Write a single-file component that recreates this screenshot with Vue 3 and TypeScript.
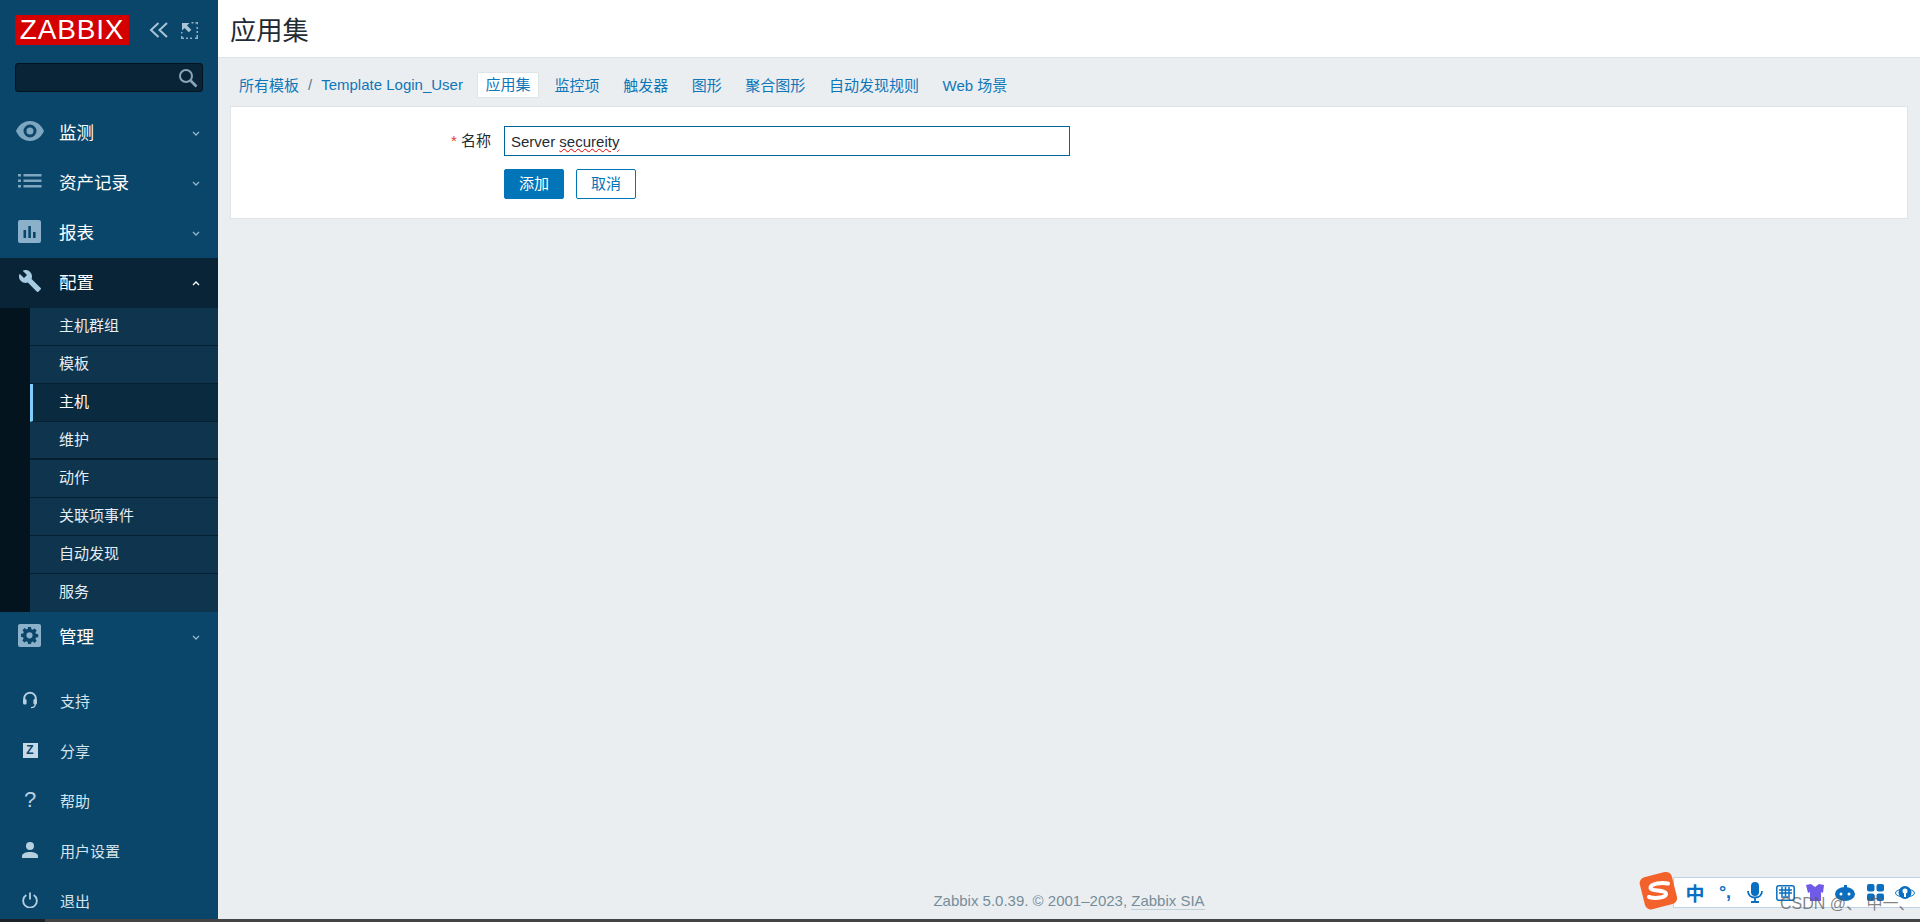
<script setup lang="ts">
interface Entry { label: string; icon: string }
const mainTop: Entry[] = [
  { label: '监测', icon: 'eye' },
  { label: '资产记录', icon: 'list' },
  { label: '报表', icon: 'chart' },
]
const subItems = [
  { label: '主机群组' },
  { label: '模板' },
  { label: '主机', active: true },
  { label: '维护', thick: true },
  { label: '动作' },
  { label: '关联项事件' },
  { label: '自动发现' },
  { label: '服务' },
]
const userItems: Entry[] = [
  { label: '支持', icon: 'head' },
  { label: '分享', icon: 'z' },
  { label: '帮助', icon: 'help' },
  { label: '用户设置', icon: 'user' },
  { label: '退出', icon: 'power' },
]
const tabs = ['监控项', '触发器', '图形', '聚合图形', '自动发现规则', 'Web 场景']
</script>

<template>
  <div class="page">
    <div class="columns">
      <aside class="side">
        <div class="brand">
          <div class="logo">ZABBIX</div>
          <svg class="collapse" width="20" height="16" viewBox="0 0 20 16" fill="none" stroke="#a9c4d6" stroke-width="2">
            <path d="M9.500 1 2 8l7.500 7M18 1l-7.500 7 7.500 7" />
          </svg>
          <svg class="expand" width="17" height="17" viewBox="0 0 17 17" fill="none">
            <path d="M10.500 .75h2M14.500 .75h1.750v1.500M16.250 5v2M16.250 9v2M16.250 13v3.250H14M11 16.250H9M7 16.250H5M3 16.250H.75V14M.75 11.500V10" stroke="#8fb0c6" stroke-width="1.500" />
            <path d="M1 1h7.500L6 3.500l4.300 4.300-2.500 2.500L3.500 6 1 8.500z" fill="#a9c4d6" />
          </svg>
        </div>
        <div class="search">
          <svg width="20" height="20" viewBox="0 0 20 20" fill="none" stroke="#8aa5b8" stroke-width="2">
            <circle cx="8" cy="8" r="6" />
            <path d="m12.500 12.500 6 6" stroke-width="2.600" />
          </svg>
        </div>

        <nav class="menu">
          <a v-for="m in mainTop" :key="m.label" class="main-item">
            <span class="main-icon">
              <svg v-if="m.icon === 'eye'" width="28" height="20" viewBox="0 0 28 20">
                <path fill-rule="evenodd" fill="#7ea6c1" d="M14 0c6.500 0 11.500 4.300 14 10-2.500 5.700-7.500 10-14 10S2.500 15.700 0 10C2.500 4.300 7.500 0 14 0Zm0 3.500a6.500 6.500 0 1 0 0 13 6.500 6.500 0 0 0 0-13Zm0 3a3.500 3.500 0 1 1 0 7 3.500 3.500 0 0 1 0-7Z" />
              </svg>
              <svg v-else-if="m.icon === 'list'" width="24" height="14" viewBox="0 0 24 14" fill="#7ea6c1">
                <rect x="0" y="0" width="3" height="2.500" /><rect x="0" y="5.500" width="3" height="2.500" /><rect x="0" y="11" width="3" height="2.500" />
                <rect x="5.500" y="0" width="18" height="2.500" /><rect x="5.500" y="5.500" width="18" height="2.500" /><rect x="5.500" y="11" width="18" height="2.500" />
              </svg>
              <svg v-else width="23" height="23" viewBox="0 0 23 23">
                <rect width="23" height="23" rx="2" fill="#8ab0ca" />
                <path d="M5.500 10h2.600v8H5.500zM10.300 6h2.600v12h-2.600zM15 12h2.600v6H15z" fill="#0a466a" />
              </svg>
            </span>
            <span class="main-label">{{ m.label }}</span>
            <svg class="chev" width="8" height="5" viewBox="0 0 8 5" fill="none" stroke="#93b4c9" stroke-width="1.300"><path d="m1 1 3 3 3-3" /></svg>
          </a>

          <a class="main-item open">
            <span class="main-icon">
              <svg width="24" height="24" viewBox="0 0 24 24">
                <path fill="#a7cbe3" d="M22.700 19 13.600 9.900c.9-2.300.4-5-1.500-6.900C10.100 1 7.100.6 4.700 1.700L9 6 6 9 1.600 4.700C.400 7.100.900 10.100 2.900 12.100c1.900 1.900 4.600 2.400 6.900 1.500l9.100 9.100c.4.400 1 .4 1.400 0l2.300-2.300c.5-.4.5-1.100.1-1.400Z" />
              </svg>
            </span>
            <span class="main-label">配置</span>
            <svg class="chev" width="8" height="5" viewBox="0 0 8 5" fill="none" stroke="#fff" stroke-width="1.300"><path d="m1 4 3-3 3 3" /></svg>
          </a>
          <ul class="sub">
            <li v-for="s in subItems" :key="s.label" class="sub-item" :class="{ active: s.active, thick: s.thick }">{{ s.label }}</li>
          </ul>

          <a class="main-item">
            <span class="main-icon">
              <svg width="23" height="23" viewBox="0 0 23 23">
                <rect width="23" height="23" rx="2" fill="#8ab0ca" />
                <path fill="#0a466a" fill-rule="evenodd" d="M10 4h3l.4 2.200 1.300.6 1.900-1.300 2.100 2.100-1.300 1.900.6 1.300 2.200.4v3l-2.200.4-.6 1.300 1.300 1.900-2.100 2.100-1.900-1.300-1.300.6L13 21h-3l-.4-2.200-1.300-.6-1.900 1.300-2.100-2.100 1.300-1.900-.6-1.300L3 13.800v-3l2.200-.4.6-1.300-1.300-1.900 2.100-2.100 1.900 1.300 1.300-.6Zm1.500 5.200a3.100 3.100 0 1 0 0 6.200 3.100 3.100 0 0 0 0-6.200Z" transform="translate(0 -1)" />
              </svg>
            </span>
            <span class="main-label">管理</span>
            <svg class="chev" width="8" height="5" viewBox="0 0 8 5" fill="none" stroke="#93b4c9" stroke-width="1.300"><path d="m1 1 3 3 3-3" /></svg>
          </a>
        </nav>

        <nav class="user-menu">
          <a v-for="u in userItems" :key="u.label" class="user-item">
            <span class="user-icon">
              <svg v-if="u.icon === 'head'" width="16" height="18" viewBox="0 0 16 18" fill="none">
                <path d="M2.200 10V7.500a5.800 5.800 0 0 1 11.600 0V10" stroke="#b6d0e0" stroke-width="2" />
                <rect x="1" y="8" width="3.600" height="5.500" rx="1.500" fill="#b6d0e0" />
                <rect x="11.400" y="8" width="3.600" height="5.500" rx="1.500" fill="#b6d0e0" />
                <path d="M13.300 13c0 2.500-2 3.600-4.300 3.600" stroke="#b6d0e0" stroke-width="1.300" />
              </svg>
              <span v-else-if="u.icon === 'z'" class="z-tile">Z</span>
              <span v-else-if="u.icon === 'help'" class="q-mark">?</span>
              <svg v-else-if="u.icon === 'user'" width="16" height="16" viewBox="0 0 16 16" fill="#b6d0e0">
                <circle cx="8" cy="4" r="4" />
                <path d="M0 16v-2c0-2.500 4-4 8-4s8 1.500 8 4v2z" />
              </svg>
              <svg v-else width="16" height="16" viewBox="0 0 16 16" fill="none" stroke="#b6d0e0" stroke-width="1.800">
                <path d="M4.300 3.100a6.800 6.800 0 1 0 7.400 0M8 .5v7" />
              </svg>
            </span>
            <span class="user-label">{{ u.label }}</span>
          </a>
        </nav>
      </aside>

      <main class="main">
        <header class="head"><h1>应用集</h1></header>
        <div class="content">
          <div class="crumbs">
            <a class="link">所有模板</a>
            <span class="slash">/</span>
            <a class="link">Template Login_User</a>
            <span class="tab current">应用集</span>
            <a v-for="t in tabs" :key="t" class="link tab">{{ t }}</a>
          </div>
          <section class="card">
            <div class="form-row">
              <label class="form-label"><span class="star">*</span> 名称</label>
              <div class="input"><span>Server </span><span class="typo">secureity</span></div>
            </div>
            <div class="actions">
              <span class="btn primary">添加</span>
              <span class="btn ghost">取消</span>
            </div>
          </section>
          <footer class="foot">Zabbix 5.0.39. © 2001–2023, <span class="sia">Zabbix SIA</span></footer>
        </div>
      </main>
    </div>
    <div class="strip"><span class="strip-dark"></span></div>

    <div class="ime">
      <svg class="ime-logo" width="40" height="40" viewBox="0 0 40 40">
        <rect x="3" y="3" width="33" height="33" rx="6" fill="#f2622a" transform="rotate(-14 20 20)" />
        <path d="M29 12.500C23 11 12 12.500 11.500 16.500 11 20.500 27 18.500 27 23c0 3.500-10 5-17 3" fill="none" stroke="#fff" stroke-width="4" stroke-linecap="round" />
      </svg>
      <div class="ime-bar">
        <span class="ime-zh">中</span>
        <span class="ime-punct">°,</span>
        <svg width="16" height="21" viewBox="0 0 16 21" fill="none">
          <rect x="4" y="0" width="8" height="14" rx="4" fill="#0a6fc0" />
          <path d="M1 9c0 4 3 6.500 7 6.500S15 13 15 9M8 15.500V20M4 20h8" stroke="#0a6fc0" stroke-width="1.800" />
        </svg>
        <svg width="19" height="16" viewBox="0 0 19 16" fill="none" stroke="#0a6fc0" stroke-width="1.500">
          <rect x=".8" y=".8" width="17.400" height="14.400" rx="2" />
          <path d="M3 5h13M3 8h13M6 2v9M9.500 2v9M13 2v9M5 12h9" />
        </svg>
        <svg width="18" height="18" viewBox="0 0 18 18"><path d="M0 1 5 0l4 3 4-3 5 1-1 8-2-1v9H4V8L2 9z" fill="#6f5be8" /></svg>
        <svg width="20" height="16" viewBox="0 0 20 16">
          <ellipse cx="10" cy="9" rx="10" ry="7" fill="#0a6fc0" />
          <rect x="9" y="0" width="3" height="4" fill="#0a6fc0" />
          <circle cx="6" cy="9" r="1.500" fill="#fff" /><circle cx="14" cy="9" r="1.500" fill="#fff" />
        </svg>
        <svg width="17" height="17" viewBox="0 0 17 17" fill="#0a6fc0">
          <rect width="7.500" height="7.500" rx="2" /><rect x="9.500" width="7.500" height="7.500" rx="2" />
          <rect y="9.500" width="7.500" height="7.500" rx="2" /><rect x="9.500" y="9.500" width="7.500" height="7.500" rx="2" />
        </svg>
        <svg width="20" height="20" viewBox="0 0 20 20">
          <ellipse cx="10" cy="10" rx="9.500" ry="4" fill="none" stroke="#0a6fc0" stroke-width="1" />
          <circle cx="10" cy="9.500" r="6.500" fill="#0a6fc0" />
          <circle cx="10" cy="8" r="2.500" fill="#fff" /><rect x="9" y="9" width="2" height="5" fill="#fff" />
        </svg>
      </div>
    </div>
    <div class="mark">CSDN @、 中一、</div>
  </div>
</template>

<style>
html, body { margin: 0; padding: 0; background: #ebeef1; }
</style>

<style scoped>
.page {
  position: relative;
  height: 922px;
  display: flex;
  flex-direction: column;
  overflow: hidden;
  font-family: "Liberation Sans", "Noto Sans CJK SC", sans-serif;
  background: #ebeef1;
}
.columns { flex: 1; display: flex; min-height: 0; }
.strip { height: 3px; flex: none; background: #444; display: flex; }
.strip-dark { width: 45px; background: #1c2226; }

.side {
  width: 218px;
  flex: none;
  background: #0a466a;
  overflow: hidden;
  display: flex;
  flex-direction: column;
}
.brand {
  display: flex;
  flex: none;
  align-items: center;
  height: 30px;
  padding: 15px 0 0 15px;
}
.logo {
  width: 114px;
  height: 30px;
  background: #d40000;
  color: #fff;
  font-size: 28px;
  line-height: 30px;
  letter-spacing: .8px;
  text-align: center;
}
.collapse { margin-left: 20px; }
.expand { margin-left: 12px; }
.search {
  flex: none;
  margin: 18px 15px 0;
  height: 29px;
  box-sizing: border-box;
  background: #082436;
  border: 1px solid #04131d;
  border-radius: 3px;
  display: flex;
  align-items: center;
  justify-content: flex-end;
  padding-right: 4px;
}
.menu { margin-top: 16px; flex: none; }
.main-item {
  height: 50px;
  box-sizing: border-box;
  padding-bottom: 4px;
  display: flex;
  align-items: center;
  color: #fff;
  font-size: 17.5px;
}
.main-item.open { background: #082436; }
.main-icon { width: 59px; flex: none; display: flex; justify-content: center; }
.main-label { flex: 1; }
.chev { margin: 4px 18px 0 0; }

.sub { list-style: none; margin: 0; padding: 0 0 0 30px; background: #03141e; }
.sub-item {
  height: 38px;
  box-sizing: border-box;
  padding-left: 29px;
  line-height: 36px;
  font-size: 15px;
  color: #e6eef3;
  background: #0e344e;
  border-bottom: 1px solid #05202f;
}
.sub-item:last-child { border-bottom: 0; }
.sub-item.active {
  background: #0a2a3f;
  color: #fff;
  border-left: 3px solid #7fcdfb;
  padding-left: 26px;
}
.sub-item.thick { border-bottom: 2px solid #05202f; }

.user-menu { margin-top: 13px; flex: none; }
.user-item {
  height: 50px;
  flex: none;
  display: flex;
  align-items: center;
  font-size: 15px;
  color: #d6e4ed;
}
.user-icon { width: 60px; flex: none; display: flex; justify-content: center; }
.z-tile {
  width: 15px;
  height: 15px;
  background: #c5d9e6;
  color: #0a466a;
  font: bold 12px/15px "Liberation Sans", sans-serif;
  text-align: center;
}
.q-mark { color: #b6d0e0; font: 22px/22px "Liberation Sans", sans-serif; }

.main { flex: 1; min-width: 0; display: flex; flex-direction: column; }
.head {
  height: 58px;
  flex: none;
  box-sizing: border-box;
  background: #fff;
  border-bottom: 1px solid #dfe4e7;
  padding-left: 12px;
  display: flex;
  align-items: center;
}
.head h1 { margin: 0; font-size: 26.25px; font-weight: 400; color: #1f2c33; }
.content { flex: 1; display: flex; flex-direction: column; padding: 0 12px; min-height: 0; }

.crumbs {
  display: flex;
  flex: none;
  align-items: center;
  height: 26px;
  margin-top: 14px;
  padding-left: 9px;
  font-size: 15px;
}
.link { color: #0f76b8; margin-bottom: 2px; }
.slash { color: #5f7585; margin: 0 9px 2px; }
.tab { white-space: nowrap; }
.link.tab { margin-left: 23.6px; }
.tab.current {
  margin-left: 14px;
  margin-right: -8px;
  width: 62px;
  height: 26px;
  box-sizing: border-box;
  background: #fff;
  border: 1px solid #dfe4e7;
  border-radius: 2px;
  color: #0f76b8;
  text-align: center;
  line-height: 24px;
}
.card {
  flex: none;
  margin-top: 8px;
  height: 113px;
  box-sizing: border-box;
  background: #fff;
  border: 1px solid #dfe4e7;
  padding: 19px 0 0 273px;
}
.form-row { display: flex; align-items: center; }
.form-label {
  width: 120px;
  margin-left: -120px;
  padding: 0 13px 3px 0;
  box-sizing: border-box;
  text-align: right;
  font-size: 15px;
  color: #1f2c33;
}
.star { color: #e33734; }
.input {
  width: 566px;
  height: 30px;
  box-sizing: border-box;
  border: 1px solid #00639c;
  padding-left: 6px;
  font-size: 15px;
  line-height: 29px;
  color: #1f2c33;
  white-space: pre;
}
.typo { text-decoration: underline wavy #e00000 1.1px; text-underline-offset: 1px; }
.actions { display: flex; gap: 12px; margin-top: 13px; }
.btn {
  width: 60px;
  height: 30px;
  box-sizing: border-box;
  border-radius: 2px;
  font-size: 15px;
  line-height: 28px;
  text-align: center;
  border: 1px solid #0275b8;
}
.btn.primary { background: #0275b8; color: #fff; }
.btn.ghost { background: #fff; color: #0275b8; }
.foot {
  margin-top: auto;
  padding-bottom: 8px;
  text-align: center;
  font-size: 15px;
  line-height: 20px;
  color: #768d99;
}
.sia { border-bottom: 1px solid #c3cfd6; }

.ime { position: absolute; left: 1639px; top: 871px; width: 281px; height: 40px; }
.ime-logo { position: absolute; left: 0; top: 0; z-index: 1; }
.ime-bar {
  position: absolute;
  left: 34px;
  top: 6px;
  right: 0;
  height: 31px;
  box-sizing: border-box;
  background: #fff;
  border: 1px solid #bcd3ea;
  border-right: 0;
  display: grid;
  grid-template-columns: repeat(8, 30px);
  justify-items: center;
  align-items: center;
  padding-left: 6px;
}
.ime-zh { color: #0a6fc0; font-size: 19px; font-weight: 700; }
.ime-punct { color: #0a6fc0; font-size: 18px; font-weight: 700; }
.mark {
  position: absolute;
  left: 1780px;
  top: 894px;
  font-size: 16px;
  line-height: 20px;
  color: rgba(90, 90, 90, .75);
  white-space: nowrap;
}
</style>
